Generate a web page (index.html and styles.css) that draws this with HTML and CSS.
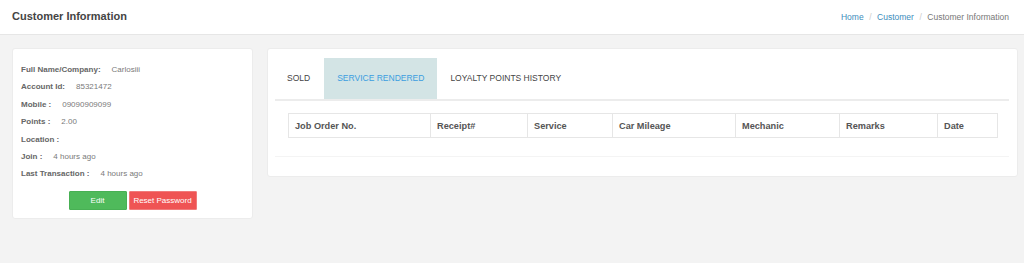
FILE: index.html
```html
<!DOCTYPE html>
<html lang="en">
<head>
    <meta charset="UTF-8" />
    <title>Customer Information</title>
    <link rel="stylesheet" href="styles.css">
</head>
<body>
    <header class="page-header">
        <h1>Customer Information</h1>
        <ol class="breadcrumb">
            <li><a href="#">Home</a></li>
            <li><a href="#">Customer</a></li>
            <li class="current">Customer Information</li>
        </ol>
    </header>

    <main class="content">
        <section class="card profile">
            <div class="row"><b>Full Name/Company:</b><span>Carlosiii</span></div>
            <div class="row"><b>Account Id:</b><span>85321472</span></div>
            <div class="row"><b>Mobile :</b><span>09090909099</span></div>
            <div class="row"><b>Points :</b><span>2.00</span></div>
            <div class="row"><b>Location :</b><span></span></div>
            <div class="row"><b>Join :</b><span>4 hours ago</span></div>
            <div class="row"><b>Last Transaction :</b><span>4 hours ago</span></div>
            <div class="actions">
                <button class="btn btn-edit">Edit</button>
                <button class="btn btn-reset">Reset Password</button>
            </div>
        </section>

        <section class="card history">
            <ul class="tabs">
                <li>Sold</li>
                <li class="active">Service Rendered</li>
                <li>Loyalty Points History</li>
            </ul>
            <div class="tab-body">
                <table>
                    <thead>
                        <tr>
                            <th>Job Order No.</th>
                            <th>Receipt#</th>
                            <th>Service</th>
                            <th>Car Mileage</th>
                            <th>Mechanic</th>
                            <th>Remarks</th>
                            <th>Date</th>
                        </tr>
                    </thead>
                    <tbody></tbody>
                </table>
            </div>
            <hr>
        </section>
    </main>
</body>
</html>
```

FILE: styles.css
```css
body {
    margin: 0;
    font-family: "Liberation Sans", Arial, sans-serif;
    background: #f3f3f3;
    color: #555;
}
.page-header {
    display: flex;
    align-items: center;
    justify-content: space-between;
    height: 34px;
    padding: 0 15px 0 12px;
    background: #fff;
    border-bottom: 1px solid #e6e6e6;
}
.page-header h1 {
    margin: 0 0 2px 0;
    font-size: 11px;
    font-weight: bold;
    color: #444;
}
.breadcrumb {
    display: flex;
    margin: 0;
    padding: 0;
    list-style: none;
    font-size: 8.5px;
}
.breadcrumb li + li::before {
    content: "/";
    color: #ccc;
    padding: 0 5.5px;
}
.breadcrumb a {
    color: #3c8dbc;
    text-decoration: none;
}
.breadcrumb .current {
    color: #777;
}
.content {
    display: flex;
    align-items: flex-start;
    gap: 14px;
    padding: 13px 6px 0 12px;
}
.card {
    background: #fff;
    border: 1px solid #ececec;
    border-radius: 3px;
    box-sizing: border-box;
}
.profile {
    flex: 0 0 241px;
    padding: 12px 8px 8px 8px;
    font-size: 8px;
}
.profile .row {
    line-height: 17.4px;
    color: #7a7a7a;
}
.profile .row b {
    color: #666;
}
.profile .row span {
    margin-left: 11px;
}
.actions {
    display: flex;
    justify-content: center;
    gap: 2px;
    margin-top: 8px;
}
.btn {
    height: 19px;
    border: 1px solid transparent;
    border-radius: 1px;
    color: #fff;
    font-family: inherit;
    font-size: 8px;
    padding: 0;
    cursor: pointer;
}
.btn-edit {
    width: 58px;
    background: #4fba5b;
    border-color: #48b054;
}
.btn-reset {
    width: 68px;
    background: #ef5454;
    border-color: #f07b7b;
}
.history {
    flex: 1;
    min-width: 0;
    padding: 9px 8px 19px 7px;
}
.tabs {
    display: flex;
    margin: 0;
    padding: 0;
    list-style: none;
    border-bottom: 2px solid #ececec;
}
.tabs li {
    padding: 0 13px;
    height: 41px;
    line-height: 41px;
    font-size: 8.5px;
    text-transform: uppercase;
    color: #444;
}
.tabs li:first-child {
    padding: 0 14px 0 12px;
}
.tabs li.active {
    background: #d3e4e5;
    color: #3b9ee0;
}
.tab-body {
    padding: 12px 12px 0 13px;
}
table {
    width: 709px;
    border-collapse: collapse;
    table-layout: fixed;
}
th {
    box-sizing: border-box;
    height: 24px;
    padding: 0 6px;
    border: 1px solid #e6e6e6;
    text-align: left;
    font-size: 9.2px;
    font-weight: bold;
    color: #555;
}
th:nth-child(1) { width: 142px; }
th:nth-child(2) { width: 97px; }
th:nth-child(3) { width: 85px; }
th:nth-child(4) { width: 123px; }
th:nth-child(5) { width: 104px; }
th:nth-child(6) { width: 98px; }
th:nth-child(7) { width: 60px; }
hr {
    margin: 18px 0 0 0;
    border: 0;
    border-top: 1px solid #f4f4f4;
}
```
